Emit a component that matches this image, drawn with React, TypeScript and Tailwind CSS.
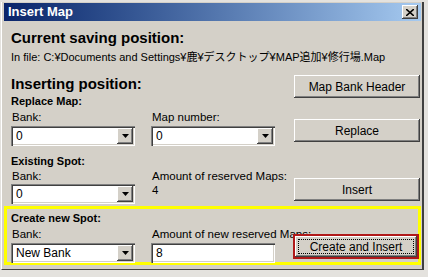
import React from 'react';

const raised =
  'bg-[#d4d0c8] shadow-[inset_-1px_-1px_#404040,inset_1px_1px_#ffffff,inset_-2px_-2px_#808080,inset_2px_2px_#d4d0c8]';
const sunken =
  'bg-white shadow-[inset_1px_1px_#808080,inset_2px_2px_#404040,inset_-1px_-1px_#ffffff,inset_-2px_-2px_#d4d0c8]';

const Arrow: React.FC = () => (
  <svg width="7" height="4" viewBox="0 0 7 4">
    <path d="M0 0h7L3.5 4z" fill="#000" />
  </svg>
);

const Combo: React.FC<{ value: string }> = ({ value }) => (
  <div className={`${sunken} w-[124px] h-[20px] flex items-center pl-[5px] pr-[2px]`}>
    <span className="flex-1 text-[12px] leading-none">{value}</span>
    <div className={`${raised} w-[16px] h-[16px] flex items-center justify-center`}>
      <Arrow />
    </div>
  </div>
);

const Button: React.FC<{ label: string; className?: string }> = ({ label, className = '' }) => (
  <div className={`${raised} w-[126px] h-[23px] flex items-center justify-center text-[12px] ${className}`}>
    {label}
  </div>
);

export default function App() {
  return (
    <div
      className="w-[428px] h-[277px] bg-[#e4e2de] overflow-hidden text-black"
      style={{ fontFamily: '"Liberation Sans", "Noto Sans CJK JP", sans-serif' }}
    >
      <div className="ml-[1px] mt-[2px] w-[423px] h-[268px] bg-[#d4d0c8] border-l border-l-white border-r-2 border-r-[#404040] border-b border-b-[#404040] pl-[2px] pt-[1px]">
        {/* Title bar */}
        <div className="h-[18px] mr-[1px] bg-gradient-to-r from-[#0a246a] to-[#a6caf0] flex items-center pl-[4px] pr-[3px]">
          <span className="flex-1 text-white font-bold text-[13px]">Insert Map</span>
          <div className={`${raised} w-[16px] h-[14px] flex items-center justify-center`}>
            <svg width="8" height="7" viewBox="0 0 8 7">
              <path d="M0 0l8 7M8 0L0 7" stroke="#000" strokeWidth="1.6" />
            </svg>
          </div>
        </div>

        <div className="pl-[7px] pt-[8px]">
          <div className="text-[15px] font-bold leading-[18px]">Current saving position:</div>
          <div className="text-[11px] leading-[15px] mt-[3px]">
            In file: C:¥Documents and Settings¥鹿¥デスクトップ¥MAP追加¥修行場.Map
          </div>
        </div>

        {/* Inserting position */}
        <div className="flex pl-[7px] mt-[3px]">
          <div className="w-[283px] text-[11.5px]">
            <div className="text-[15px] font-bold leading-[18px] mt-[7px]">Inserting position:</div>
            <div className="text-[11px] font-bold leading-[14px] mt-[1px]">Replace Map:</div>
            <div className="flex gap-[16px] mt-[2px]">
              <div className="flex flex-col gap-[1px]">
                <span className="leading-[15px] ml-[1px]">Bank:</span>
                <Combo value="0" />
              </div>
              <div className="flex flex-col gap-[1px]">
                <span className="leading-[15px] ml-[1px]">Map number:</span>
                <Combo value="0" />
              </div>
            </div>
            <div className="text-[11px] font-bold leading-[14px] mt-[8px]">Existing Spot:</div>
            <div className="flex gap-[16px] mt-[1px]">
              <div className="flex flex-col gap-[0px]">
                <span className="leading-[15px] ml-[1px]">Bank:</span>
                <Combo value="0" />
              </div>
              <div className="flex flex-col leading-[14px] ml-[1px]">
                <span className="whitespace-nowrap">Amount of reserved Maps:</span>
                <span>4</span>
              </div>
            </div>
          </div>
          <div className="flex flex-col">
            <Button label="Map Bank Header" className="mt-[7px]" />
            <Button label="Replace" className="mt-[21px]" />
            <Button label="Insert" className="mt-[36px]" />
          </div>
        </div>

        {/* Create new spot */}
        <div className="mt-[2px] mr-[1px] border-[3px] border-[#ffff00] h-[59px] pl-[4px] pt-[2px] flex text-[11.5px]">
          <div className="w-[283px]">
            <div className="text-[11px] font-bold leading-[14px]">Create new Spot:</div>
            <div className="flex gap-[16px] mt-[2px]">
              <div className="flex flex-col gap-[1px]">
                <span className="leading-[15px] ml-[1px]">Bank:</span>
                <Combo value="New Bank" />
              </div>
              <div className="flex flex-col gap-[1px]">
                <span className="leading-[15px] ml-[1px] whitespace-nowrap">Amount of new reserved Maps:</span>
                <div className={`${sunken} w-[124px] h-[20px] flex items-center pl-[5px] text-[12px]`}>8</div>
              </div>
            </div>
          </div>
          <div className="relative mt-[23px] -ml-[1px]">
            <div className="w-[126px] h-[25px] border-2 border-[#b01818] bg-[#d4d0c8]">
              <div className={`${raised} w-full h-full p-[3px]`}>
                <div className="w-full h-full border border-dotted border-black flex items-center justify-center text-[12px]">
                  Create and Insert
                </div>
              </div>
            </div>
          </div>
        </div>
      </div>
    </div>
  );
}
